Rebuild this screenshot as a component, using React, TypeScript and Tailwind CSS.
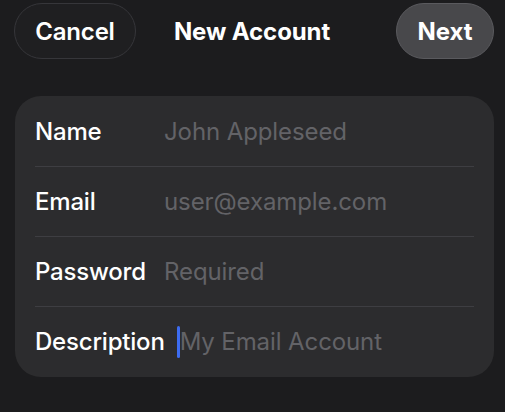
import { useState } from 'react'

const fields = [
  { label: 'Name', placeholder: 'John Appleseed' },
  { label: 'Email', placeholder: 'user@example.com' },
  { label: 'Password', placeholder: 'Required' },
  { label: 'Description', placeholder: 'My Email Account', focused: true },
]

export default function App() {
  const [values] = useState<Record<string, string>>({})

  return (
    <div
      className="w-[505px] h-[412px] bg-[#1c1c1e] text-white overflow-hidden"
      style={{ fontFamily: 'Inter, "Noto Sans", sans-serif' }}
    >
      <div className="flex items-center justify-between pl-[14px] pr-[11px] pt-[3px]">
        <button className="h-[56px] w-[122px] rounded-full bg-[#1f1f21] border border-[#36363a] text-[24px] font-semibold tracking-[-0.2px] pt-[1px]">
          Cancel
        </button>
        <h1 className="text-[24px] font-bold tracking-[-0.1px] mr-[28px] pt-[1px]">New Account</h1>
        <button className="h-[56px] w-[98px] rounded-full bg-[#48484b] border border-[#5a5a5e] text-[24px] font-bold tracking-[-0.1px] pt-[1px]">
          Next
        </button>
      </div>

      <div className="mx-[15px] mt-[37px] w-[479px] rounded-[26px] bg-[#2c2c2e] pl-[20px] pr-[20px] pt-[1px]">
        {fields.map((f, i) => (
          <div
            key={f.label}
            className={`flex items-center h-[70px] ${i < fields.length - 1 ? 'border-b border-[#3e3e42]' : ''}`}
          >
            <span className="min-w-[117px] mr-[12px] shrink-0 text-[24px] font-medium tracking-[-0.2px]">{f.label}</span>
            <span className="flex items-center text-[24px] text-[#636367] tracking-[-0.1px]">
              {f.focused && <span className="inline-block w-[3px] h-[32px] rounded-full bg-[#3d6cf0]" />}
              {values[f.label] || f.placeholder}
            </span>
          </div>
        ))}
      </div>
    </div>
  )
}
